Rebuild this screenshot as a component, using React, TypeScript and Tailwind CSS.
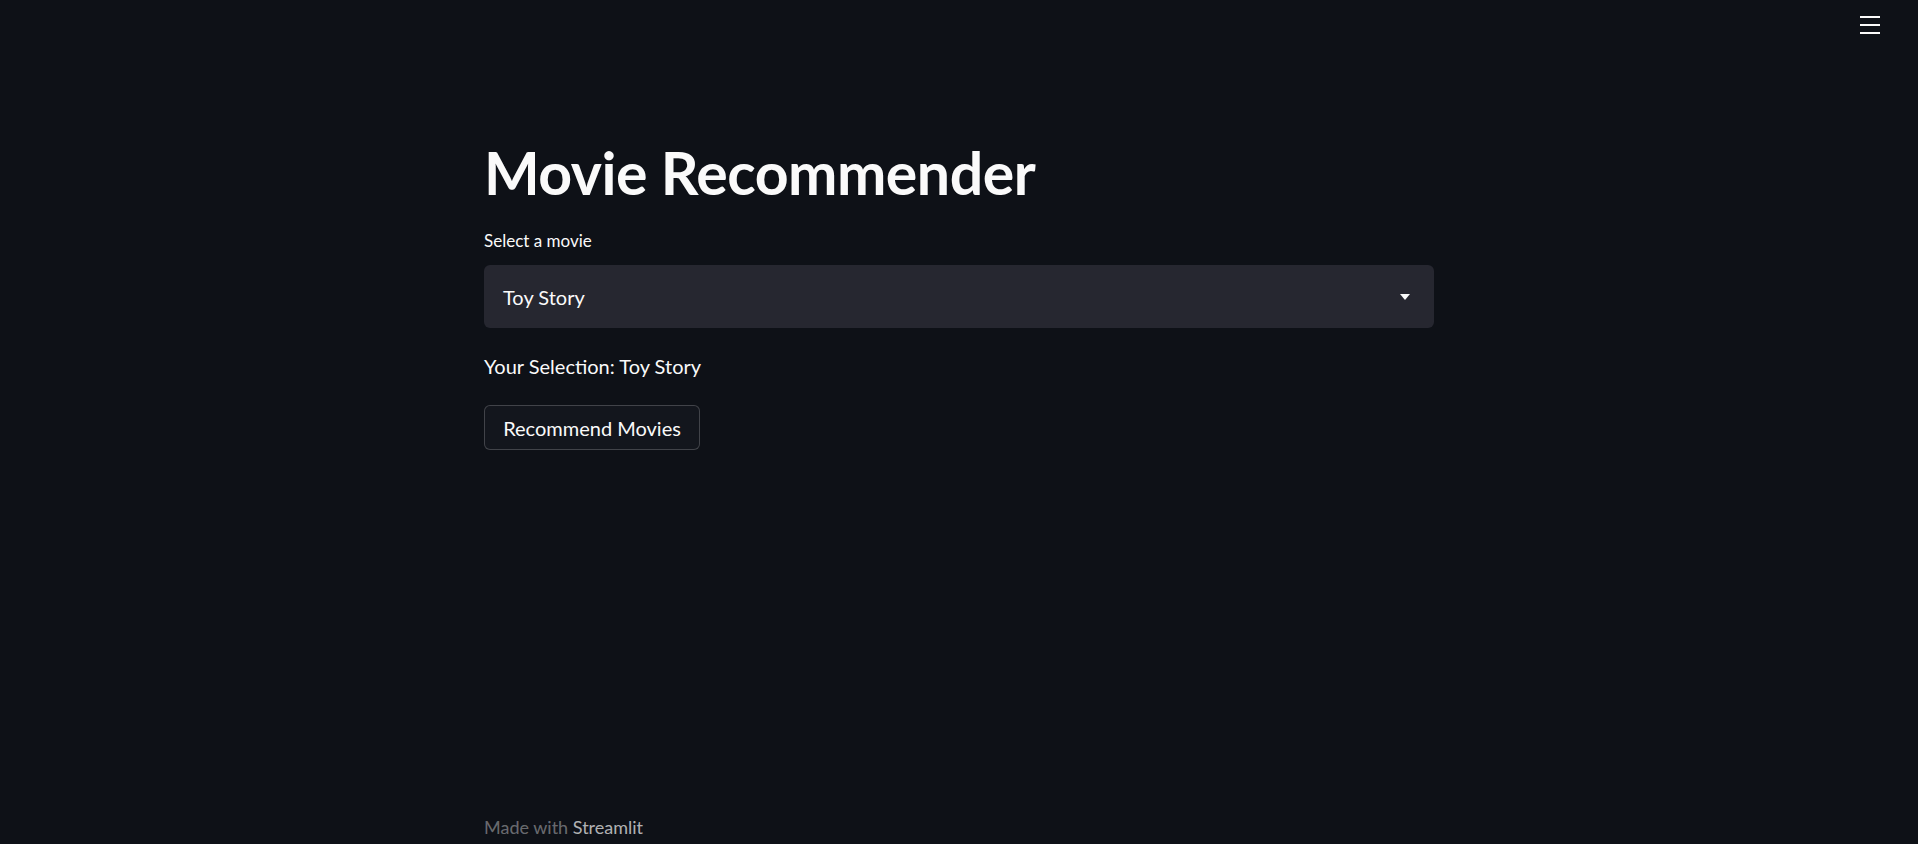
export default function App() {
  return (
    <div className="flex h-[844px] flex-col overflow-hidden bg-[#0e1117] text-[#fafafa] [font-family:Lato,'Noto_Sans',sans-serif]">
      <header className="flex h-[50px] shrink-0 justify-end pr-[38px] pt-[16px]">
        <button type="button" className="flex h-[18px] w-[20px] flex-col justify-between">
          <span className="h-[2px] w-full bg-[#fafafa]" />
          <span className="h-[2px] w-full bg-[#fafafa]" />
          <span className="h-[2px] w-full bg-[#fafafa]" />
        </button>
      </header>

      <main className="mx-auto flex w-[950px] flex-1 flex-col pt-[90px]">
        <h1 className="text-[59px] font-bold leading-[66px] tracking-[-0.5px]">Movie Recommender</h1>

        <label className="mt-[24px] text-[17px] leading-[22px]">Select a movie</label>
        <div className="mt-[13px] flex h-[63px] items-center justify-between rounded-[6px] bg-[#262730] pl-[19px] pr-[24px]">
          <span className="text-[20px]">Toy Story</span>
          <svg width="10" height="6" viewBox="0 0 10 6">
            <path d="M0 0h10L5 6z" fill="#fafafa" />
          </svg>
        </div>

        <p className="mt-[24px] text-[20px] leading-[28px]">Your Selection: Toy Story</p>

        <button
          type="button"
          className="mt-[25px] h-[45px] w-[216px] rounded-[6px] border border-[rgba(250,250,250,0.2)] bg-[#13161d] text-[20px]"
        >
          Recommend Movies
        </button>
      </main>

      <footer className="mx-auto w-[950px] pb-[3px] text-[18px] text-[rgba(250,250,250,0.4)]">
        Made with <span className="text-[rgba(250,250,250,0.7)]">Streamlit</span>
      </footer>
    </div>
  );
}
